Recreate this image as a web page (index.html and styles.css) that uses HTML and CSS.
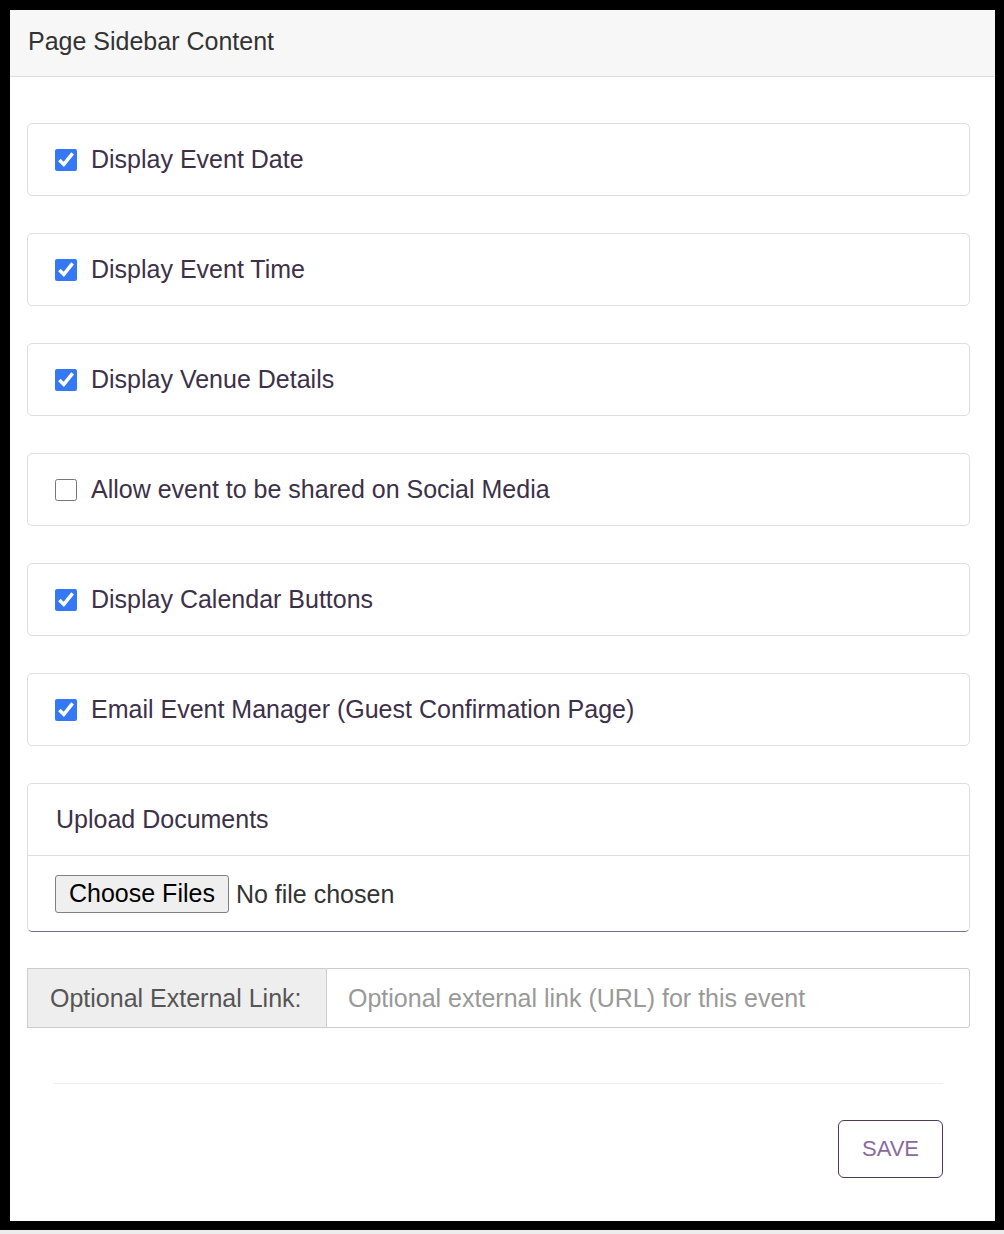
FILE: index.html
```html
<!DOCTYPE html>
<html>
<head>
    <title>Page Sidebar Content</title>
    <link rel="stylesheet" href="styles.css">
</head>
<body>
    <div class="screen">
        <div class="panel">
            <div class="panel-heading">Page Sidebar Content</div>

            <div class="panel-body">
                <label class="option"><input type="checkbox" checked> Display Event Date</label>
                <label class="option"><input type="checkbox" checked> Display Event Time</label>
                <label class="option"><input type="checkbox" checked> Display Venue Details</label>
                <label class="option"><input type="checkbox"> Allow event to be shared on Social Media</label>
                <label class="option"><input type="checkbox" checked> Display Calendar Buttons</label>
                <label class="option"><input type="checkbox" checked> Email Event Manager (Guest Confirmation Page)</label>

                <div class="upload">
                    <div class="upload-heading">Upload Documents</div>
                    <div class="upload-body">
                        <input type="file" multiple>
                    </div>
                </div>

                <div class="input-group">
                    <span class="addon">Optional External Link:</span>
                    <input type="text" class="link-input" placeholder="Optional external link (URL) for this event">
                </div>

                <div class="footer">
                    <hr>
                    <div class="button-row">
                        <button class="save">SAVE</button>
                    </div>
                </div>
            </div>
        </div>
    </div>
</body>
</html>
```

FILE: styles.css
```css
body {
    margin: 0;
    padding: 0;
    background: #ececec;
    font-family: "Liberation Sans", Arial, sans-serif;
}

.screen {
    background: #000;
    padding: 10px 9px 9px 10px;
}

.panel {
    background: #fff;
    height: 1211px;
}

.panel-heading {
    height: 66px;
    line-height: 62px;
    padding: 0 18px;
    background: #f7f7f7;
    border-bottom: 1px solid #dcdcdc;
    color: #333;
    font-size: 25px;
}

.panel-body {
    padding: 46px 25px 0 17px;
    display: flex;
    flex-direction: column;
}

.option {
    display: flex;
    align-items: center;
    gap: 14px;
    height: 71px;
    padding: 0 27px;
    margin-bottom: 37px;
    border: 1px solid #dedede;
    border-radius: 5px;
    color: #3d3049;
    font-size: 25px;
}

.option input {
    width: 22px;
    height: 22px;
    margin: 0;
    accent-color: #3478f6;
}

.upload {
    border: 1px solid #dedede;
    border-bottom-color: #7d6b8e;
    border-radius: 5px;
    margin-bottom: 36px;
}

.upload-heading {
    height: 71px;
    line-height: 70px;
    padding: 0 28px;
    border-bottom: 1px solid #dedede;
    color: #3d3049;
    font-size: 25px;
}

.upload-body {
    height: 75px;
    padding: 0 27px;
    display: flex;
    align-items: center;
}

.upload-body input {
    font-family: "Liberation Sans", Arial, sans-serif;
    font-size: 25px;
    color: #333;
}

.upload-body input::file-selector-button {
    font-family: "Liberation Sans", Arial, sans-serif;
    font-size: 25px;
    height: 38px;
    padding: 0 13px;
    margin-right: 7px;
    background: #efefef;
    border: 1px solid #808080;
    border-radius: 3px;
    color: #000;
}

.input-group {
    display: flex;
    height: 60px;
}

.addon {
    width: 276px;
    padding-left: 22px;
    display: flex;
    align-items: center;
    background: #eee;
    border: 1px solid #ccc;
    border-right: none;
    color: #555;
    font-size: 25px;
}

.link-input {
    flex: 1;
    margin: 0;
    padding: 0 21px;
    border: 1px solid #ccc;
    border-radius: 0 3px 3px 0;
    font-family: "Liberation Sans", Arial, sans-serif;
    font-size: 25px;
    color: #555;
    outline: none;
}

.link-input::placeholder {
    color: #999;
}

.footer {
    padding: 0 27px;
}

hr {
    margin: 55px 0 36px;
    border: none;
    border-top: 1px solid #eee;
}

.button-row {
    display: flex;
    justify-content: flex-end;
}

.save {
    width: 105px;
    height: 58px;
    background: #fff;
    border: 1px solid #4b3a5c;
    border-radius: 6px;
    color: #8a6a9e;
    font-family: "Liberation Sans", Arial, sans-serif;
    font-size: 22px;
    cursor: pointer;
}
```
